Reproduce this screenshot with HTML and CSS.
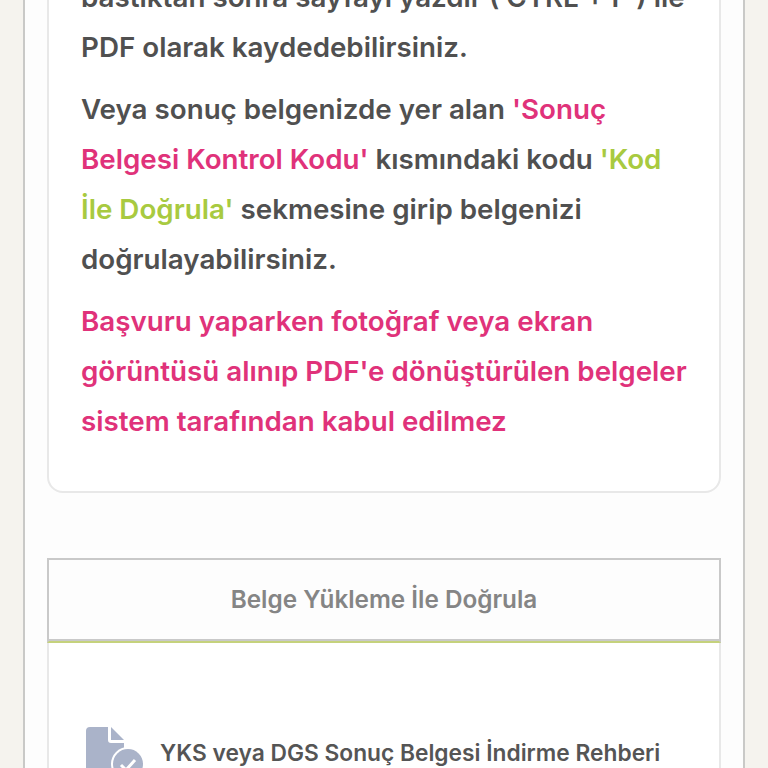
FILE: index.html
```html
<!DOCTYPE html>
<html lang="tr">
<head>
    <meta charset="UTF-8">
    <title>Belge Doğrulama</title>
    <link rel="stylesheet" href="styles.css">
</head>
<body>
    <div class="page">
        <div class="card">
            <p>bastıktan sonra sayfayı yazdır ( CTRL + P ) ile PDF olarak kaydedebilirsiniz.</p>
            <p>Veya sonuç belgenizde yer alan <span class="pink">'Sonuç Belgesi Kontrol Kodu'</span> kısmındaki kodu <span class="green">'Kod İle Doğrula'</span> sekmesine girip belgenizi doğrulayabilirsiniz.</p>
            <p class="pink">Başvuru yaparken fotoğraf veya ekran görüntüsü alınıp PDF'e dönüştürülen belgeler sistem tarafından kabul edilmez</p>
        </div>
        <div class="tabs">
            <div class="tab">Belge Yükleme İle Doğrula</div>
            <div class="tabBody">
                <div class="guide">
                    <svg class="guideIcon" viewBox="0 0 58 64" width="58" height="64">
                        <path fill="#aab3c9" d="M5 0H23V13Q23 16 26 16H39V52H5Q1 52 1 48V4Q1 0 5 0Z"/>
                        <path fill="#aab3c9" d="M26 0L39 13H26Z"/>
                        <circle fill="#fff" cx="43" cy="37" r="17"/>
                        <circle fill="#aab3c9" cx="43" cy="37" r="15"/>
                        <path fill="none" stroke="#fff" stroke-width="3" d="M36 38L41 43L50 33"/>
                    </svg>
                    <span>YKS veya DGS Sonuç Belgesi İndirme Rehberi</span>
                </div>
            </div>
        </div>
    </div>
</body>
</html>
```

FILE: styles.css
```css
*{
    padding: 0;
    margin: 0;
    box-sizing: border-box;
}
html,body{
    height: 768px;
    overflow: hidden;
}
body{
    background: #f5f3ee;
    font-family: "Inter", "Liberation Sans", sans-serif;
}
.page{
    width: 722px;
    height: 800px;
    margin: -30px auto 0;
    padding: 0 22px;
    background: #fdfdfd;
    border-left: 2px solid #c9c9c7;
    border-right: 2px solid #c9c9c7;
}
.card{
    background: #fff;
    border: 2px solid #e8e8e8;
    border-radius: 16px;
    padding: 0 32px 33px 32px;
}
.card p{
    font-size: 27.75px;
    font-weight: 600;
    line-height: 50px;
    color: #505050;
    margin-bottom: 12px;
}
.card .pink,.pink{
    color: #e0327a;
}
.green{
    color: #a8ca40;
}
.tabs{
    margin-top: 65px;
}
.tab{
    height: 85px;
    border: 2px solid #c9c9c9;
    border-bottom: 2px solid #c5d27c;
    box-shadow: inset 0 -2px 0 #c9c9c9;
    background: #fdfdfd;
    text-align: center;
    line-height: 78px;
    font-size: 24.3px;
    font-weight: 600;
    color: #858585;
}
.tabBody{
    height: 200px;
    background: #fff;
    border-left: 2px solid #e8e8e8;
    border-right: 2px solid #e8e8e8;
    padding: 84px 0 0 36px;
}
.guide{
    display: flex;
    align-items: flex-start;
    gap: 17px;
    font-size: 22.75px;
    font-weight: 600;
    color: #555;
}
.guide span{
    margin-top: 12px;
}
```
